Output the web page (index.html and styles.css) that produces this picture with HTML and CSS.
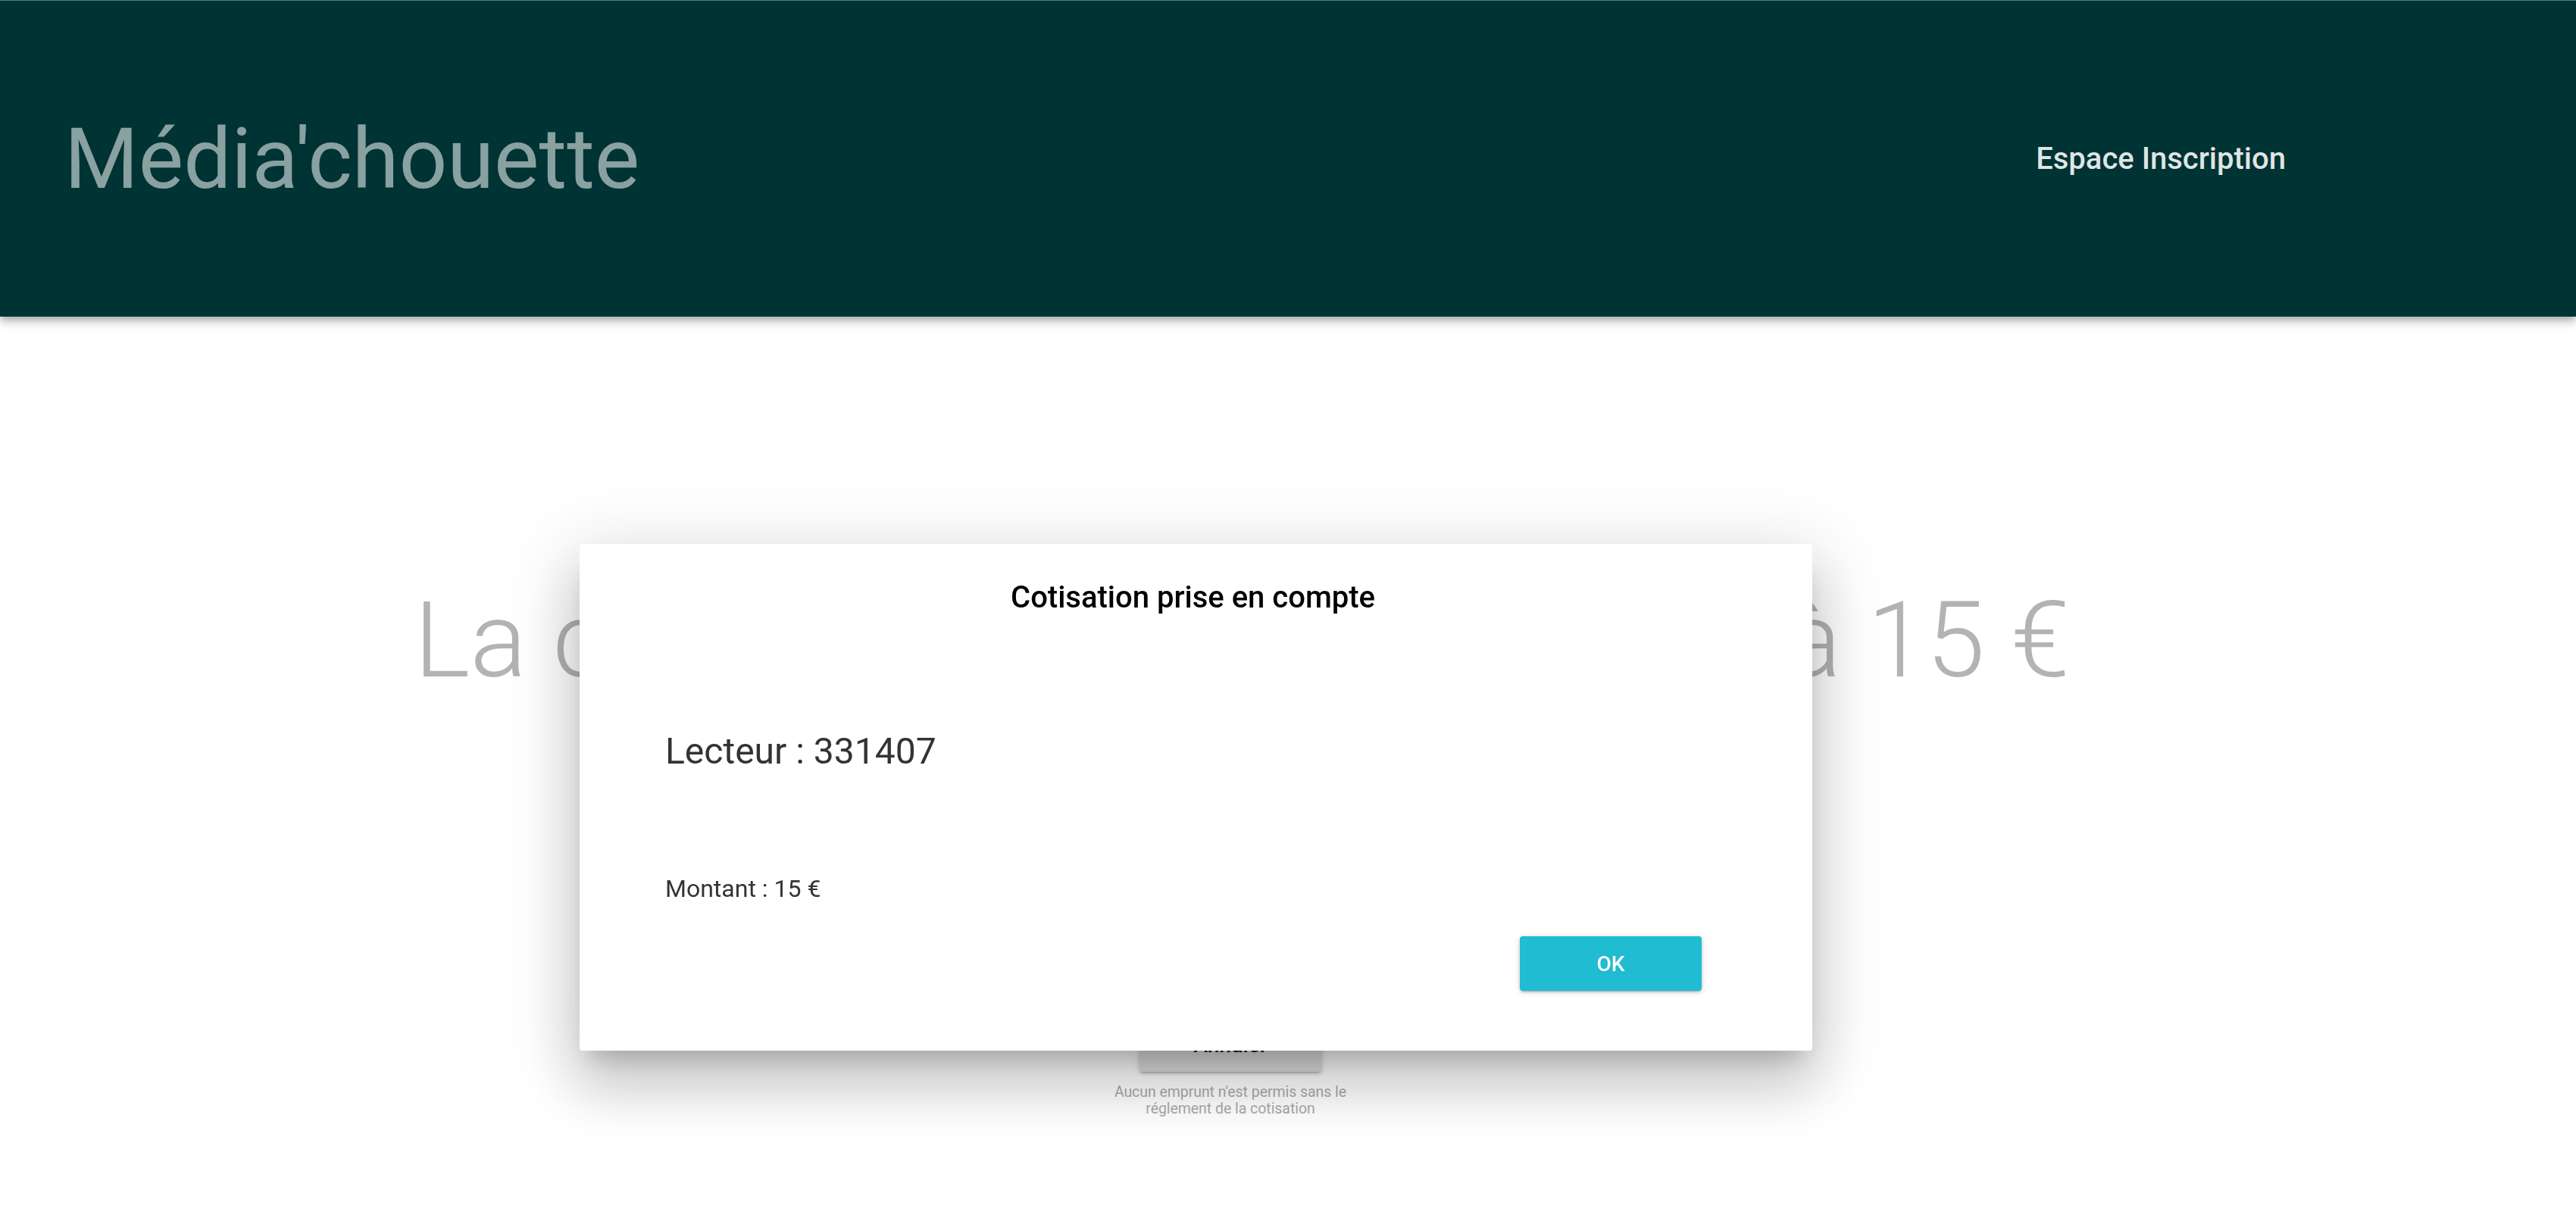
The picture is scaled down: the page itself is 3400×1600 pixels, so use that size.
FILE: index.html
```html
<!DOCTYPE html>
<html lang="fr">
<head>
<meta charset="utf-8">
<title>Média'chouette</title>
<link rel="stylesheet" href="styles.css">
</head>
<body>
<header class="topbar">
  <div class="brand">Média'chouette</div>
  <nav class="nav"><a class="nav-link" href="#">Espace Inscription</a></nav>
</header>
<main class="content">
  <h1 class="amount-title">La cotisation annuelle s'élève à 15 €</h1>
  <div class="actions">
    <button class="btn btn-cancel" type="button">Annuler</button>
    <p class="hint">Aucun emprunt n'est permis sans le<br>réglement de la cotisation</p>
  </div>
</main>
<div class="dialog" role="dialog">
  <h2 class="dialog-title">Cotisation prise en compte</h2>
  <div class="dialog-body">
    <div class="reader">Lecteur : 331407</div>
    <div class="sum">Montant : 15 €</div>
    <div class="dialog-actions">
      <button class="btn btn-ok" type="button">OK</button>
    </div>
  </div>
</div>
</body>
</html>
```
FILE: styles.css
```css
* { box-sizing: border-box; }
html, body { margin: 0; padding: 0; background: #ffffff; }
body {
  font-family: Roboto, "Liberation Sans", Arial, sans-serif;
  width: 3400px;
  height: 1600px;
  overflow: hidden;
}
.topbar {
  height: 418px;
  background: #003333;
  border-top: 1px solid #587878;
  display: flex;
  align-items: center;
  justify-content: space-between;
  padding: 0 383px 0 85px;
  box-shadow: 0 4px 8px -2px rgba(0,0,0,.2), 0 8px 10px 0 rgba(0,0,0,.14), 0 2px 20px 0 rgba(0,0,0,.12);
  position: relative;
  z-index: 1;
}
.brand {
  font-size: 112px;
  font-weight: 400;
  color: rgba(255,255,255,.54);
  line-height: 1;
}
.nav-link {
  font-size: 40px;
  font-weight: 500;
  color: rgba(255,255,255,.88);
  text-decoration: none;
}
.content {
  display: flex;
  flex-direction: column;
  align-items: center;
  padding: 345px 152px 0 0;
}
.amount-title {
  margin: 0 0 0 30px;
  font-size: 140px;
  font-weight: 300;
  color: #b3b3b3;
  line-height: normal;
  white-space: nowrap;
}
.actions {
  margin-top: 416px;
  display: flex;
  flex-direction: column;
  align-items: center;
}
.btn {
  font-family: Roboto, "Liberation Sans", Arial, sans-serif;
  border: 0;
  border-radius: 4px;
  height: 72px;
  font-size: 28px;
  font-weight: 500;
  cursor: pointer;
  box-shadow: 0 3px 2px -2px rgba(0,0,0,.2), 0 2px 4px 0 rgba(0,0,0,.14), 0 1px 10px 0 rgba(0,0,0,.12);
}
.btn-cancel {
  width: 240px;
  background: #e0e0e0;
  color: #000;
}
.hint {
  margin: 16px 0 0;
  font-size: 19.4px;
  line-height: 22px;
  color: #aaaaaa;
  text-align: center;
}
.dialog {
  position: fixed;
  left: 765px;
  top: 718px;
  width: 1627px;
  height: 669px;
  background: #ffffff;
  border-radius: 4px;
  padding: 47px 0 0;
  box-shadow: 0 22px 30px -14px rgba(0,0,0,.2), 0 48px 76px 6px rgba(0,0,0,.14), 0 18px 92px 16px rgba(0,0,0,.12);
  z-index: 5;
}
.dialog-title {
  margin: 0;
  font-size: 40px;
  font-weight: 500;
  line-height: 48px;
  color: #000;
  text-align: center;
  padding-right: 8px;
}
.dialog-body {
  display: flex;
  flex-direction: column;
  padding: 0 146px 0 113px;
}
.reader {
  margin-top: 151px;
  font-size: 48px;
  line-height: 56px;
  color: #333333;
}
.sum {
  margin-top: 133px;
  font-size: 32px;
  line-height: 40px;
  color: #333333;
}
.dialog-actions {
  margin-top: 43px;
  display: flex;
  justify-content: flex-end;
}
.btn-ok {
  width: 240px;
  background: #1fbcd2;
  color: #ffffff;
}
```
